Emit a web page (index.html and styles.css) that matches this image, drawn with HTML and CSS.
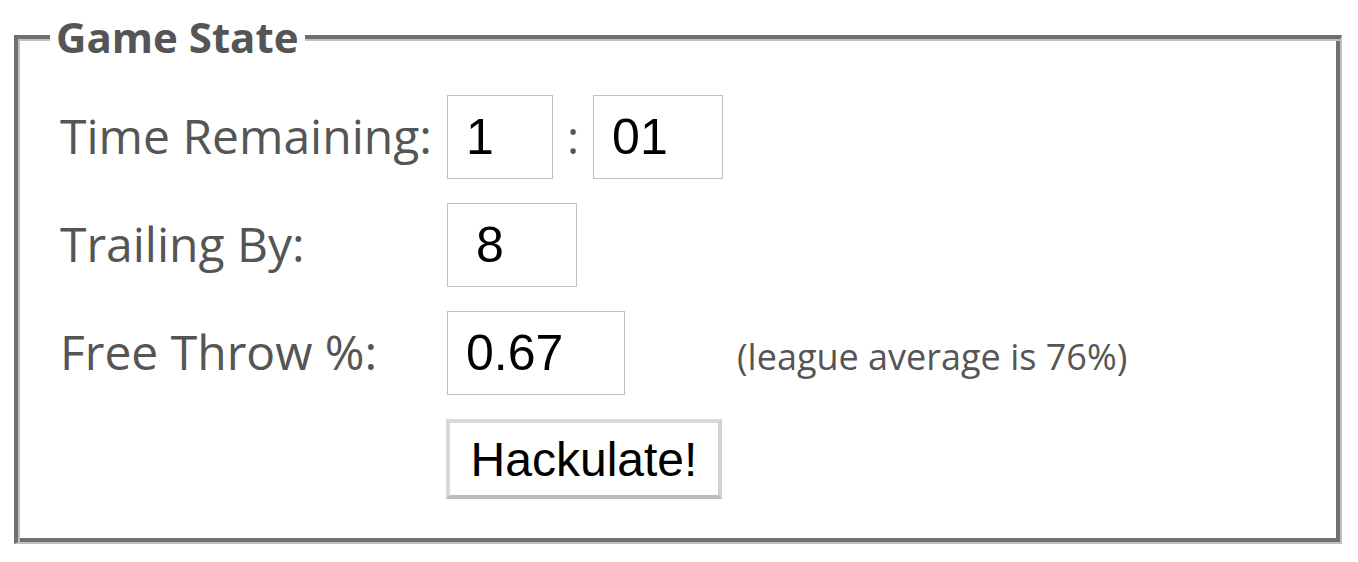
FILE: index.html
```html
<!DOCTYPE html>
<html>

<head>
    <meta charset="utf-8" />
    <title>Hackulator</title>
    <link rel="stylesheet" href="styles.css">
</head>

<body>
    <form class="wrap">
        <fieldset class="state">
            <legend>Game State</legend>
            <div class="rows">
                <label class="lbl" for="min">Time Remaining:</label>
                <div class="field">
                    <input id="min" class="num num-min" type="text" value="1" />
                    <span class="sep">:</span>
                    <input id="sec" class="num num-sec" type="text" value="01" />
                </div>

                <label class="lbl" for="trail">Trailing By:</label>
                <div class="field">
                    <input id="trail" class="num num-trail" type="text" value="8" />
                </div>

                <label class="lbl" for="ft">Free Throw %:</label>
                <div class="field">
                    <input id="ft" class="num num-ft" type="text" value="0.67" />
                    <span class="note">(league average is 76%)</span>
                </div>

                <span class="lbl"></span>
                <div class="field">
                    <button type="button" class="go">Hackulate!</button>
                </div>
            </div>
        </fieldset>
    </form>
</body>

</html>
```

FILE: styles.css
```css
* {
    box-sizing: border-box;
}

body {
    margin: 0;
    background: #fff;
    font-family: "Open Sans", "Liberation Sans", sans-serif;
    color: #555;
}

.wrap {
    padding: 8px 16px 0 14px;
}

/* groove look: outer half via border, inner half via inset shadow */
.state {
    margin: 0;
    height: 536px;
    padding: 30px 20px 0 32px;
    border-style: solid;
    border-width: 4px 2px 2px 4px;
    border-color: #6f6f6f #c0c0c0 #c0c0c0 #6f6f6f;
    box-shadow: inset 2px 2px 0 #c0c0c0, inset -4px -4px 0 #6f6f6f;
}

.state legend {
    padding: 0 6px;
    background: #fff;
    font-size: 42px;
    font-weight: bold;
    line-height: 57px;
    color: #555;
}

.rows {
    display: grid;
    grid-template-columns: 387px 1fr;
    row-gap: 24px;
    padding-left: 10px;
    align-items: baseline;
}

.lbl {
    font-size: 48px;
    color: #555;
}

.field {
    display: flex;
    align-items: baseline;
}

.num {
    height: 84px;
    padding: 0 0 0 18px;
    border: 1px solid #c0c0c0;
    font-family: "Liberation Sans", Arial, sans-serif;
    font-size: 50px;
    color: #000;
    background: #fff;
    outline: none;
}

.num-min { width: 106px; }
.num-sec { width: 130px; }
.num-trail { width: 130px; padding-left: 28px; }
.num-ft { width: 178px; }

.sep {
    margin: 0 14px;
    font-size: 46px;
    color: #555;
}

.note {
    margin-left: 112px;
    font-size: 36px;
    color: #555;
}

.go {
    width: 276px;
    height: 80px;
    margin-left: -1px;
    padding: 0;
    border: 4px solid #d9d9d9;
    border-right-color: #d0d0d0;
    border-bottom-color: #bcbcbc;
    background: #fff;
    font-family: "Liberation Sans", Arial, sans-serif;
    font-size: 48px;
    color: #000;
}
```
